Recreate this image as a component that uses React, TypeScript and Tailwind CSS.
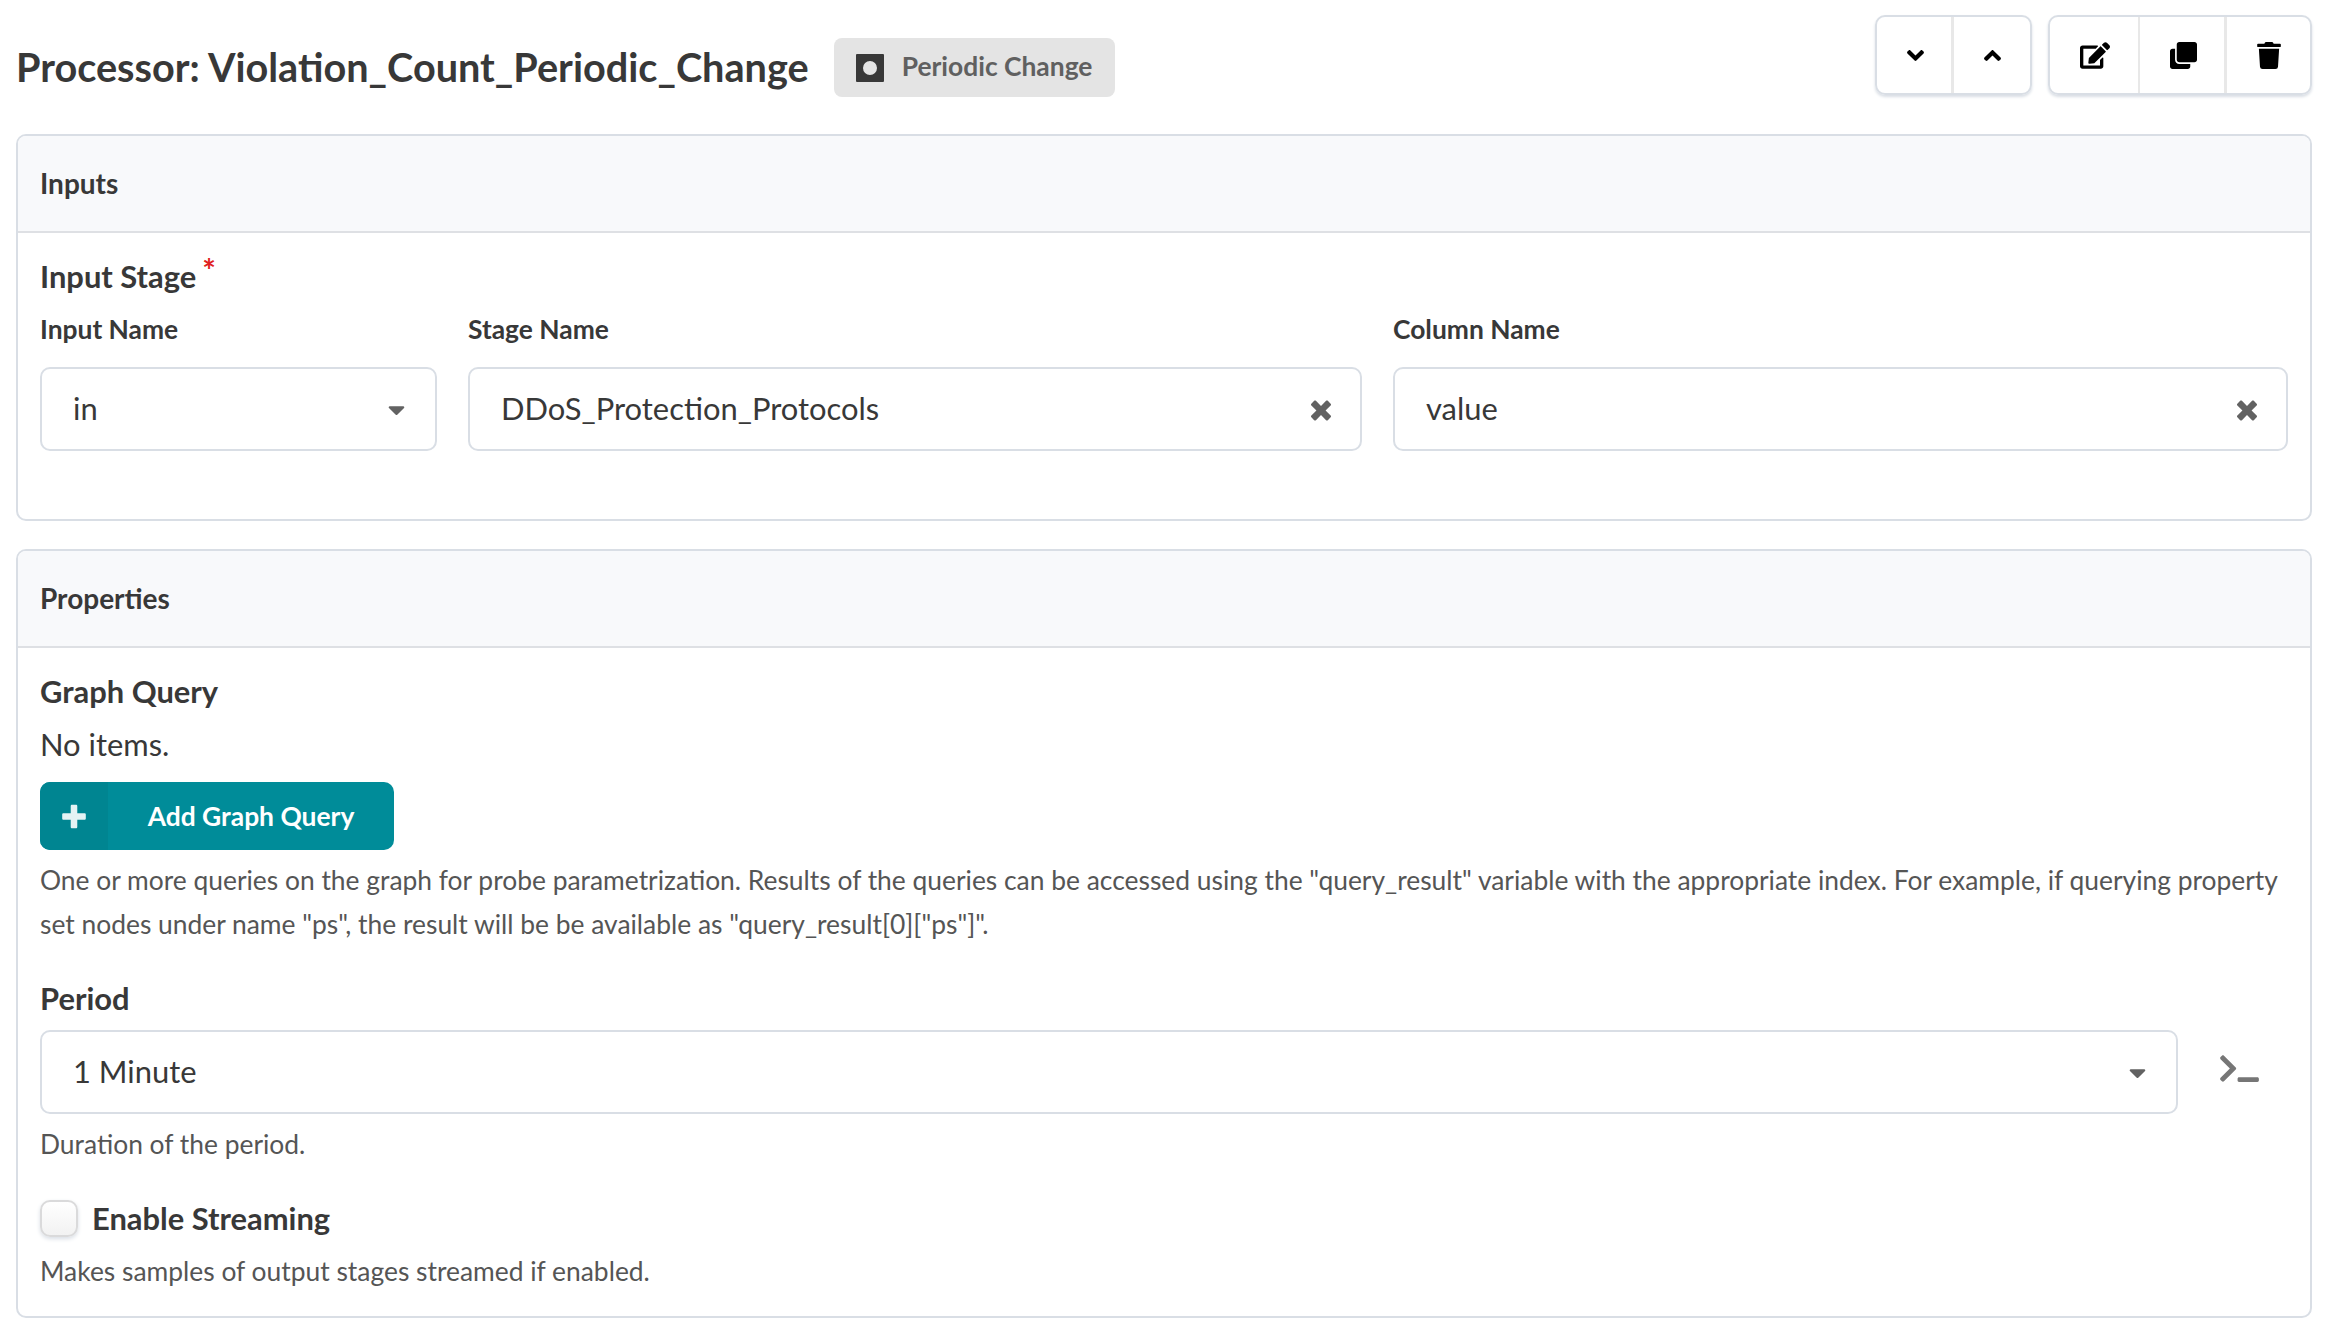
import React from "react";
import { FaAngleDown, FaAngleUp, FaCaretDown, FaClone, FaEdit, FaTerminal, FaTrash } from "react-icons/fa";

function CloseIcon({ className }: { className: string }) {
  return (
    <svg viewBox="0 0 384 512" fill="currentColor" className={className}>
      <path d="M323.1 441l53.9-53.9c9.4-9.4 9.4-24.5 0-33.9L279.8 256l97.2-97.2c9.4-9.4 9.4-24.5 0-33.9L323.1 71c-9.4-9.4-24.5-9.4-33.9 0L192 168.2 94.8 71c-9.4-9.4-24.5-9.4-33.9 0L7 124.9c-9.4 9.4-9.4 24.5 0 33.9l97.2 97.2L7 353.2c-9.4 9.4-9.4 24.5 0 33.9L60.9 441c9.4 9.4 24.5 9.4 33.9 0l97.2-97.2 97.2 97.2c9.3 9.3 24.5 9.3 33.9 0z" />
    </svg>
  );
}

function PlusIcon({ className }: { className: string }) {
  return (
    <svg viewBox="0 0 448 512" fill="currentColor" className={className}>
      <path d="M448 294.2v-76.4c0-13.3-10.7-24-24-24H286.2V56c0-13.3-10.7-24-24-24h-76.4c-13.3 0-24 10.7-24 24v137.8H24c-13.3 0-24 10.7-24 24v76.4c0 13.3 10.7 24 24 24h137.8V456c0 13.3 10.7 24 24 24h76.4c13.3 0 24-10.7 24-24V318.2H424c13.3 0 24-10.7 24-24z" />
    </svg>
  );
}

function Select({ value, clearable = false, className = "" }: { value: string; clearable?: boolean; className?: string }) {
  return (
    <div className={`flex h-[84px] items-center justify-between rounded-[10px] border-2 border-[#d9dee5] pl-[31px] text-[30.9px] leading-[37px] ${className}`}>
      <span className="mb-[2px]">{value}</span>
      {clearable ? (
        <CloseIcon className="mt-[2px] mr-[29px] h-[27px] w-[20px] text-[#626262]" />
      ) : (
        <FaCaretDown className="mr-[30px] h-[27px] w-[17px] text-[#626262]" />
      )}
    </div>
  );
}

function Card({ title, className, children }: { title: string; className: string; children: React.ReactNode }) {
  return (
    <section className={`flex flex-col overflow-hidden rounded-[10px] border-2 border-[#d9dee5] ${className}`}>
      <header className="h-[97px] shrink-0 border-b-2 border-[#dee0e4] bg-[#f8f9fb] px-[22px] pt-[28px] text-[28px] leading-[38px] font-bold">
        {title}
      </header>
      <div className="px-[22px]">{children}</div>
    </section>
  );
}

const label = "h-[40px] text-[30.9px] leading-[42px] font-bold";
const hint = "text-[26.4px] leading-[44px] text-[#555555]";

export default function App() {
  return (
    <main className="h-[1330px] w-[2328px] overflow-hidden bg-white px-4 pt-[15px] font-['Lato',sans-serif] text-[#383838]">
      <div className="flex h-[119px] items-start">
        <h1 className="mt-[27px] text-[39.65px] leading-[50px] font-bold whitespace-nowrap">
          Processor: Violation_Count_Periodic_Change
        </h1>
        <div className="mt-[23px] ml-[25px] flex h-[59px] w-[281px] items-center rounded-[8px] bg-[#e4e4e4] pl-[22px]">
          <svg viewBox="0 0 28 28" className="h-[28px] w-[28px]">
            <path fill="currentColor" fillRule="evenodd" d="M1 0h26a1 1 0 0 1 1 1v26a1 1 0 0 1-1 1H1a1 1 0 0 1-1-1V1a1 1 0 0 1 1-1Zm13 7a7 7 0 1 0 0 14a7 7 0 0 0 0-14Z" />
          </svg>
          <span className="mb-[3px] ml-[18px] text-[26.4px] leading-8 font-bold whitespace-nowrap text-[#606060]">Periodic Change</span>
        </div>
        <div className="ml-auto flex gap-4 text-black">
          <div className="flex h-[80px] w-[157px] rounded-[10px] border-2 border-[#d9dee5] shadow-[0_2px_3px_#d9dee5]">
            <button className="flex w-[77px] items-center justify-center border-r-[3px] border-[#e8e8e8] pl-[2px]"><FaAngleDown className="h-[27px] w-[17px]" /></button>
            <button className="flex flex-1 items-center justify-center"><FaAngleUp className="h-[27px] w-[17px]" /></button>
          </div>
          <div className="flex h-[80px] w-[264px] rounded-[10px] border-2 border-[#d9dee5] shadow-[0_2px_3px_#d9dee5]">
            <button className="flex w-[90px] items-center justify-center border-r-2 border-[#e8e8e8] pl-[2px]"><FaEdit className="h-[27px] w-[30px]" /></button>
            <button className="flex w-[87px] items-center justify-center border-r-[3px] border-[#e8e8e8] pl-[3px]"><FaClone className="h-[27px] w-[27px]" /></button>
            <button className="flex flex-1 items-center justify-center"><FaTrash className="h-[27px] w-[24px]" /></button>
          </div>
        </div>
      </div>

      <Card title="Inputs" className="h-[387px]">
        <div className={`mt-[23px] ${label}`}>
          Input Stage
          <span className="relative -top-[5px] ml-[6px] text-[32px] leading-none text-[#e02020]">*</span>
        </div>
        <div className="mt-[15px] grid grid-cols-[397px_894px_895px] gap-x-[31px] text-[26.4px] leading-[36px] font-bold">
          <span>Input Name</span>
          <span>Stage Name</span>
          <span>Column Name</span>
        </div>
        <div className="mt-[20px] grid grid-cols-[397px_894px_895px] gap-x-[31px]">
          <Select value="in" />
          <Select value="DDoS_Protection_Protocols" clearable />
          <Select value="value" clearable />
        </div>
      </Card>

      <Card title="Properties" className="mt-[28px] h-[769px]">
        <div className={`mt-[23px] ${label}`}>Graph Query</div>
        <div className="mt-[13px] h-[40px] text-[30.9px] leading-[42px]">No items.</div>
        <button className="mt-[18px] flex h-[68px] w-[354px] overflow-hidden rounded-[10px] bg-[#008c99] text-white">
          <span className="flex h-full w-[68px] items-center justify-center bg-[#008591]"><PlusIcon className="h-[27px] w-[24px] text-[#e5f3f4]" /></span>
          <span className="flex-1 text-center text-[26.4px] leading-[68px] font-bold">Add Graph Query</span>
        </button>
        <p className={`mt-[8px] ${hint}`}>
          One or more queries on the graph for probe parametrization. Results of the queries can be accessed using the "query_result" variable with the appropriate index. For example, if querying property<br />
          set nodes under name "ps", the result will be be available as "query_result[0]["ps"]".
        </p>
        <div className={`mt-[32px] ${label}`}>Period</div>
        <div className="mt-[12px] flex">
          <Select value="1 Minute" className="w-[2138px]" />
          <FaTerminal className="mt-[23px] ml-[42px] h-[31px] w-[39px] text-[#767676]" />
        </div>
        <p className={`mt-[8px] ${hint}`}>Duration of the period.</p>
        <div className="mt-[32px] flex">
          <span className="mt-[2px] h-[37px] w-[38px] rounded-[10px] border-2 border-[#dadadb] bg-linear-to-b from-white to-[#f2f2f2] shadow-[0_2px_4px_#d9dee5]" />
          <span className={`ml-[14px] ${label}`}>Enable Streaming</span>
        </div>
        <p className={`mt-[11px] ${hint}`}>Makes samples of output stages streamed if enabled.</p>
      </Card>
    </main>
  );
}
